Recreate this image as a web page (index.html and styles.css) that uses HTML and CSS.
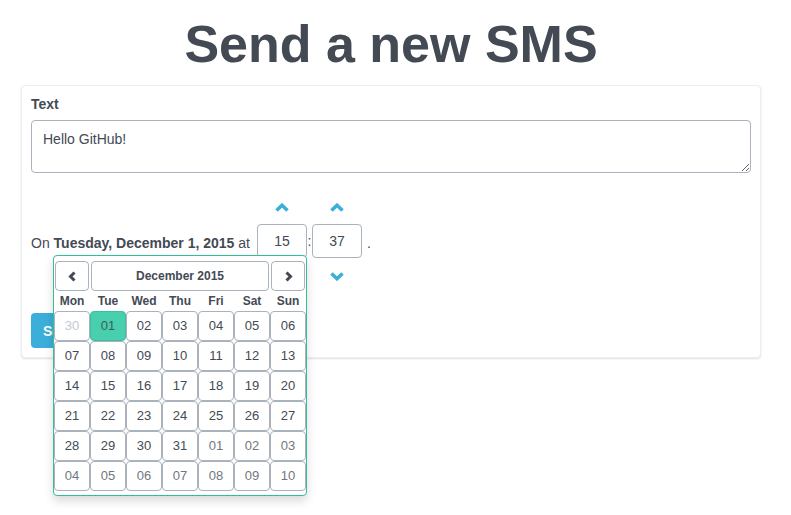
FILE: index.html
```html
<!DOCTYPE html>
<html>
<head>
<meta charset="utf-8">
<link rel="stylesheet" href="styles.css">
</head>
<body>
<div class="page">
  <h1 class="title">Send a new SMS</h1>
  <div class="card">
    <label class="label">Text</label>
    <textarea class="textarea">Hello GitHub!</textarea>
    <div class="when">
      <span class="when-text">On <b>Tuesday, December 1, 2015</b> at</span>
      <div class="timepicker">
        <div class="tcol">
          <span class="chev"><svg width="14" height="9" viewBox="0 0 14 9"><polyline points="1.5,7.5 7,2.3 12.5,7.5" fill="none" stroke="#3bafda" stroke-width="3.6"/></svg></span>
          <span class="tbox">15</span>
          <span class="chev"><svg width="14" height="9" viewBox="0 0 14 9"><polyline points="1.5,1.5 7,6.7 12.5,1.5" fill="none" stroke="#3bafda" stroke-width="3.6"/></svg></span>
        </div>
        <span class="colon">:</span>
        <div class="tcol">
          <span class="chev"><svg width="14" height="9" viewBox="0 0 14 9"><polyline points="1.5,7.5 7,2.3 12.5,7.5" fill="none" stroke="#3bafda" stroke-width="3.6"/></svg></span>
          <span class="tbox">37</span>
          <span class="chev"><svg width="14" height="9" viewBox="0 0 14 9"><polyline points="1.5,1.5 7,6.7 12.5,1.5" fill="none" stroke="#3bafda" stroke-width="3.6"/></svg></span>
        </div>
      </div>
      <span class="period">.</span>

      <div class="datepicker">
        <div class="dp-head">
          <span class="dp-btn"><svg width="9" height="11" viewBox="0 0 9 11"><polyline points="6.5,1.5 2.5,5.5 6.5,9.5" fill="none" stroke="#434a54" stroke-width="3"/></svg></span>
          <span class="dp-btn dp-month">December 2015</span>
          <span class="dp-btn"><svg width="9" height="11" viewBox="0 0 9 11"><polyline points="2.5,1.5 6.5,5.5 2.5,9.5" fill="none" stroke="#434a54" stroke-width="3"/></svg></span>
        </div>
        <div class="dp-names">
          <span>Mon</span><span>Tue</span><span>Wed</span><span>Thu</span><span>Fri</span><span>Sat</span><span>Sun</span>
        </div>
        <div class="dp-grid">
          <span class="day disabled">30</span><span class="day active">01</span><span class="day">02</span><span class="day">03</span><span class="day">04</span><span class="day">05</span><span class="day">06</span>
          <span class="day">07</span><span class="day">08</span><span class="day">09</span><span class="day">10</span><span class="day">11</span><span class="day">12</span><span class="day">13</span>
          <span class="day">14</span><span class="day">15</span><span class="day">16</span><span class="day">17</span><span class="day">18</span><span class="day">19</span><span class="day">20</span>
          <span class="day">21</span><span class="day">22</span><span class="day">23</span><span class="day">24</span><span class="day">25</span><span class="day">26</span><span class="day">27</span>
          <span class="day">28</span><span class="day">29</span><span class="day">30</span><span class="day">31</span><span class="day new">01</span><span class="day new">02</span><span class="day new">03</span>
          <span class="day new">04</span><span class="day new">05</span><span class="day new">06</span><span class="day new">07</span><span class="day new">08</span><span class="day new">09</span><span class="day new">10</span>
        </div>
      </div>
    </div>
    <button class="send">Send</button>
  </div>
</div>
</body>
</html>
```
FILE: styles.css
```css
* { box-sizing: border-box; }
html, body { margin: 0; padding: 0; background: #fff; }
body {
  min-height: 515px;
  font-family: "Liberation Sans", Arial, Helvetica, sans-serif;
  font-size: 14px;
  line-height: 20px;
  color: #434a54;
}
.page {
  width: 740px;
  margin-left: 21px;
  min-height: 515px;
}
.title {
  margin: 0;
  padding: 14px 0 11px;
  font-size: 52px;
  line-height: 60px;
  font-weight: bold;
  text-align: center;
  color: #434a54;
}
.card {
  border: 1px solid #eceef1;
  border-radius: 4px;
  box-shadow: 0 1px 2px rgba(0,0,0,0.12);
  padding: 8px 9px 9px;
  background: #fff;
}
.label {
  display: block;
  font-weight: bold;
  line-height: 20px;
  margin-bottom: 6px;
}
.textarea {
  display: block;
  width: 720px;
  height: 53px;
  border: 1px solid #aab2bd;
  border-radius: 4px;
  padding: 8px 11px 2px;
  font-family: inherit;
  font-size: 14px;
  line-height: 20px;
  color: #434a54;
  resize: vertical;
  margin: 0;
}
.when {
  position: relative;
  display: flex;
  align-items: center;
  margin-top: 20px;
  height: 96px;
}
.when-text { white-space: nowrap; padding-top: 3px; }
.timepicker {
  display: flex;
  align-items: center;
  margin-left: 7px;
}
.tcol {
  display: flex;
  flex-direction: column;
  align-items: center;
  gap: 3px;
}
.chev {
  height: 30px;
  display: flex;
  align-items: center;
  justify-content: center;
}
.chev:first-child { padding-top: 3px; }
.tbox {
  width: 50px;
  height: 34px;
  border: 1px solid #aab2bd;
  border-radius: 4px;
  display: flex;
  align-items: center;
  justify-content: center;
  font-size: 14px;
}
.colon {
  width: 5px;
  text-align: center;
}
.period { margin-left: 5px; padding-top: 3px; }

.datepicker {
  position: absolute;
  left: 22px;
  top: 62px;
  width: 254px;
  border: 1px solid #37bc9b;
  border-radius: 4px;
  background: #fff;
  padding: 4px 0 4px;
  box-shadow: 0 5px 10px rgba(0,0,0,0.15);
  z-index: 5;
}
.dp-head {
  display: grid;
  grid-template-columns: 36px 180px 36px;
  height: 32px;
}
.dp-btn {
  margin: 1px;
  border: 1px solid #aab2bd;
  border-radius: 4px;
  display: flex;
  align-items: center;
  justify-content: center;
}
.dp-month {
  font-size: 12px;
  font-weight: bold;
}
.dp-names {
  display: grid;
  grid-template-columns: repeat(7, 36px);
  height: 19px;
  font-size: 12px;
  font-weight: bold;
  line-height: 19px;
  text-align: center;
}
.dp-grid {
  display: grid;
  grid-template-columns: repeat(7, 36px);
  grid-auto-rows: 30px;
}
.day {
  border: 1px solid #aab2bd;
  border-radius: 4px;
  display: flex;
  align-items: center;
  justify-content: center;
  font-size: 13px;
  color: #434a54;
}
.day.disabled { color: #c3c9d1; }
.day.new { color: #707780; }
.day.active {
  background: #48cfad;
  border-color: #3cbf9e;
  color: #3b5e5a;
}
.send {
  display: block;
  margin-top: 24px;
  height: 35px;
  padding: 0 12px;
  border: none;
  border-radius: 4px;
  background: #3bafda;
  color: #fff;
  font-family: inherit;
  font-size: 14px;
  font-weight: bold;
}
```
